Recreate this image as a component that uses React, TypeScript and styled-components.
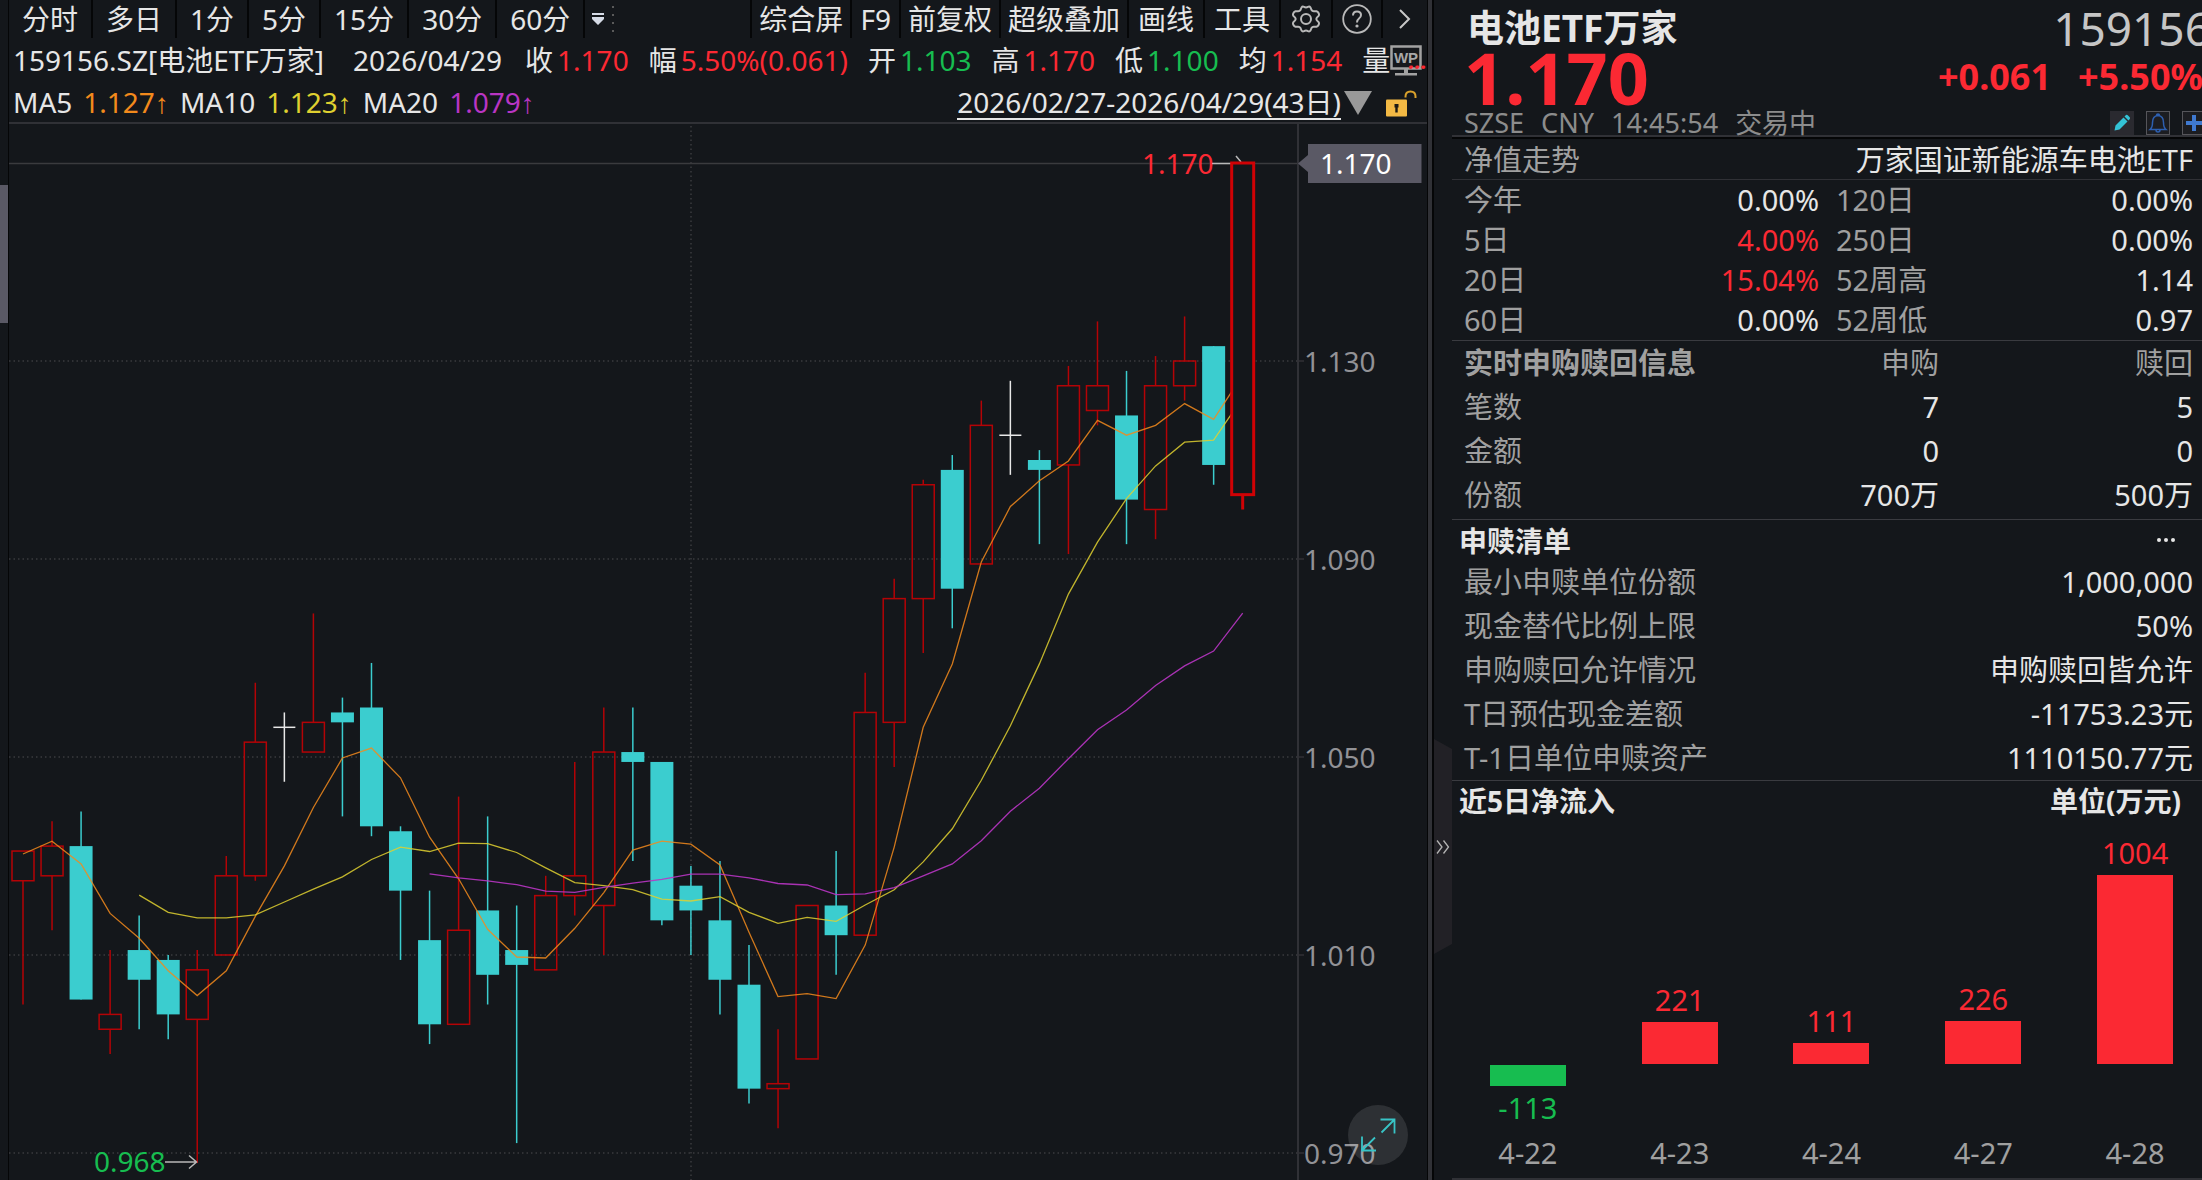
import React from "react";
import styled, { createGlobalStyle } from "styled-components";

const color = {
  bg: "#14171b",
  line: "#303136",
  black: "#050607",
  text: "#e6e6e6",
  muted: "#a0a0a0",
  up: "#fb2933",
  down: "#17bd50",
  candleUp: "#b40306",
  candleDown: "#3bcdcf",
  ma5: "#f28a1c",
  ma10: "#dfd030",
  ma20: "#b935c4",
  tag: "#5a5965",
};

const Global = createGlobalStyle`
  * { box-sizing: border-box; }
  body {
    margin: 0;
    background: ${color.bg};
    color: ${color.text};
    font-family: "Noto Sans", "Noto Sans CJK SC", sans-serif;
    font-size: 28px;
  }
  button {
    margin: 0;
    padding: 0;
    border: 0;
    background: none;
    color: inherit;
    font: inherit;
    cursor: pointer;
  }
`;

type Tone = "up" | "down" | "plain" | "muted";
const toneColor: Record<Tone, string> = {
  up: color.up,
  down: color.down,
  plain: color.text,
  muted: color.muted,
};

/* ---------- page frame ---------- */

const Page = styled.main`
  display: grid;
  grid-template-columns: 9px minmax(0, 1fr) 7px 18px 750px;
  min-height: 100vh;
  overflow: hidden;
`;

const ScrollRail = styled.div`
  border-right: 1px solid ${color.black};
  padding-top: 185px;
`;

const ScrollThumb = styled.div`
  height: 138px;
  background: ${color.tag};
`;

const Splitter = styled.div`
  background: ${color.line};
  border-left: 1px solid ${color.black};
  border-right: 2px solid ${color.black};
`;

const HandleRail = styled.div`
  padding-top: 739px;
`;

const CollapseButton = styled.button`
  display: flex;
  align-items: center;
  justify-content: center;
  width: 18px;
  height: 215px;
  background: #222126;
  clip-path: polygon(0 0, 100% 10px, 100% 205px, 0 100%);
`;

/* ---------- chart side ---------- */

const ChartPane = styled.section`
  position: relative;
  min-width: 0;
`;

const Toolbar = styled.nav`
  display: flex;
  justify-content: space-between;
  height: 38px;
`;

const ToolGroup = styled.div<{ $bordered?: boolean }>`
  display: flex;
  border-left: ${(p) => (p.$bordered ? `2px solid ${color.black}` : "0")};
`;

const ToolButton = styled.button<{ $pad: number; $last?: boolean }>`
  display: flex;
  align-items: center;
  justify-content: center;
  padding: 0 ${(p) => p.$pad}px;
  border-right: ${(p) => (p.$last ? "0" : `2px solid ${color.black}`)};
  line-height: 38px;
  white-space: nowrap;
`;

const QuoteRow = styled.dl`
  display: flex;
  align-items: center;
  gap: 20px;
  height: 44px;
  margin: 0;
  padding-left: 4px;
  line-height: 44px;
  white-space: nowrap;
`;

const SymbolName = styled.div`
  margin-right: 9px;
`;

const QuoteDate = styled.div`
  margin-right: 3px;
`;

const Quote = styled.div`
  display: flex;
  gap: 4px;
`;

const QuoteLabel = styled.dt`
  margin: 0;
`;

const QuoteValue = styled.dd<{ $tone: Tone }>`
  margin: 0;
  color: ${(p) => toneColor[p.$tone]};
`;

const VolumeQuote = styled(Quote)`
  position: relative;
  align-items: center;
  gap: 0;
`;

const Ellipsis = styled.dd`
  position: absolute;
  right: -4px;
  top: 0;
  margin: 0;
  color: ${color.up};
  font-weight: 700;
  font-size: 22px;
`;

const IndicatorRow = styled.div`
  display: flex;
  align-items: center;
  justify-content: space-between;
  height: 42px;
  padding: 2px 10px 0 4px;
  border-bottom: 2px solid ${color.line};
  line-height: 40px;
  white-space: nowrap;
`;

const Indicators = styled.div`
  display: flex;
  gap: 11px;
`;

const IndicatorValue = styled.span<{ $color: string }>`
  color: ${(p) => p.$color};
`;

const Arrow = styled.span`
  font-family: "Liberation Serif", serif;
`;

const RangeTools = styled.div`
  display: flex;
  align-items: center;
`;

const RangeButton = styled.button`
  border-bottom: 2px solid ${color.text};
  line-height: 32px;
  margin-right: 3px;
`;

const LockButton = styled.button`
  display: flex;
  margin-left: 14px;
`;

const ChartSvg = styled.svg`
  display: block;
  width: 100%;
  height: auto;
`;

const ExpandButton = styled.button`
  position: absolute;
  right: 19px;
  bottom: 15px;
  display: flex;
  align-items: center;
  justify-content: center;
  width: 60px;
  height: 60px;
  border-radius: 50%;
  background: rgba(255, 255, 255, 0.11);
`;

/* ---------- info side ---------- */

const InfoPane = styled.aside`
  margin-right: -9px;
  font-size: 29px;
`;

const Header = styled.header`
  border-bottom: 2px solid ${color.line};
  box-shadow: 0 2px 0 ${color.black};
  height: 137px;
`;

const HeaderRow = styled.div<{ $height: number; $right: number }>`
  display: flex;
  align-items: center;
  justify-content: space-between;
  height: ${(p) => p.$height}px;
  padding: 0 ${(p) => p.$right}px 0 12px;
  line-height: ${(p) => p.$height}px;
  white-space: nowrap;
`;

const Title = styled.h1`
  margin: 0 0 0 3px;
  font-size: 37px;
  font-weight: 700;
`;

const Code = styled.span`
  color: #c6c6c6;
  font-size: 46px;
`;

const Price = styled.strong`
  color: ${color.up};
  font-size: 72px;
  font-weight: 700;
`;

const Changes = styled.div`
  display: flex;
  gap: 27px;
  color: ${color.up};
  font-size: 36px;
  font-weight: 700;
`;

const Status = styled.div`
  display: flex;
  gap: 17px;
  color: #8c8c8c;
  font-size: 27px;
`;

const IconButtons = styled.div`
  display: flex;
  gap: 12px;
`;

const IconButton = styled.button<{ $outlined?: boolean }>`
  display: flex;
  align-items: center;
  justify-content: center;
  width: 24px;
  height: 24px;
  background: ${(p) => (p.$outlined ? "#1c1d21" : "#2a2a30")};
  border: ${(p) => (p.$outlined ? "1px solid #55555a" : "0")};
`;

const FundRow = styled.div`
  display: flex;
  justify-content: space-between;
  height: 40px;
  margin-top: 3px;
  padding: 0 18px 0 12px;
  border-bottom: 1px solid ${color.line};
  line-height: 39px;
`;

const Muted = styled.span`
  color: ${color.muted};
`;

const Section = styled.section<{ $bottom?: number }>`
  border-bottom: 1px solid #3a3b40;
  padding: 0 18px ${(p) => p.$bottom ?? 0}px 12px;
`;

const Table = styled.table`
  width: 100%;
  table-layout: fixed;
  border-collapse: collapse;
`;

const Row = styled.tr<{ $height: number }>`
  height: ${(p) => p.$height}px;
  line-height: ${(p) => p.$height}px;
`;

const Head = styled.th<{ $strong?: boolean; $end?: boolean; $indent?: boolean }>`
  padding: 0 0 0 ${(p) => (p.$indent ? 17 : 0)}px;
  color: ${color.muted};
  font-weight: ${(p) => (p.$strong ? 700 : 400)};
  text-align: ${(p) => (p.$end ? "right" : "left")};
  white-space: nowrap;
`;

const Cell = styled.td<{ $tone?: Tone }>`
  padding: 0;
  color: ${(p) => toneColor[p.$tone ?? "plain"]};
  text-align: right;
  white-space: nowrap;
`;

const SectionTitle = styled.div<{ $height: number }>`
  display: flex;
  align-items: center;
  justify-content: space-between;
  height: ${(p) => p.$height}px;
  padding: 0 30px 0 7px;
  font-size: 28px;
  font-weight: 700;
`;

const TitleText = styled.h2`
  margin: 0;
  font-size: 28px;
`;

const MoreButton = styled.button`
  display: flex;
  gap: 3px;
  padding: 8px 6px;
`;

const Dot = styled.i`
  width: 4px;
  height: 4px;
  border-radius: 50%;
  background: ${color.text};
`;

const FlowSection = styled.section`
  border-bottom: 2px solid ${color.line};
  padding-bottom: 3px;
`;

const Bars = styled.div`
  display: grid;
  grid-template-columns: repeat(5, 1fr);
`;

const BarColumn = styled.figure`
  display: grid;
  grid-template-rows: 245px 67px 44px;
  margin: 0;
  line-height: 44px;
  text-align: center;
`;

const Above = styled.div`
  display: flex;
  flex-direction: column;
  align-items: center;
  justify-content: flex-end;
  color: ${color.up};
`;

const Below = styled.div`
  display: flex;
  flex-direction: column;
  align-items: center;
  padding-top: 1px;
  color: ${color.down};
`;

const Bar = styled.div`
  width: 76px;
  background: currentColor;
`;

const BarDate = styled.figcaption`
  color: ${color.muted};
`;

/* ---------- data ---------- */

const periods = ["分时", "多日", "1分", "5分", "15分", "30分", "60分"];

const tools: { label: string; pad: number }[] = [
  { label: "综合屏", pad: 7 },
  { label: "F9", pad: 8 },
  { label: "前复权", pad: 7 },
  { label: "超级叠加", pad: 7 },
  { label: "画线", pad: 9 },
  { label: "工具", pad: 9 },
];

const quotes: { label: string; value: string; tone: Tone }[] = [
  { label: "收", value: "1.170", tone: "up" },
  { label: "幅", value: "5.50%(0.061)", tone: "up" },
  { label: "开", value: "1.103", tone: "down" },
  { label: "高", value: "1.170", tone: "up" },
  { label: "低", value: "1.100", tone: "down" },
  { label: "均", value: "1.154", tone: "up" },
];

// open, close, high, low
const candles: [number, number, number, number][] = [
  [1.025, 1.031, 1.031, 1.0],
  [1.026, 1.032, 1.037, 1.015],
  [1.032, 1.001, 1.039, 1.001],
  [0.995, 0.998, 1.011, 0.99],
  [1.011, 1.005, 1.018, 0.995],
  [1.009, 0.998, 1.01, 0.993],
  [0.997, 1.007, 1.011, 0.968],
  [1.01, 1.026, 1.03, 1.01],
  [1.026, 1.053, 1.065, 1.025],
  [1.056, 1.056, 1.059, 1.045],
  [1.051, 1.057, 1.079, 1.051],
  [1.059, 1.057, 1.062, 1.038],
  [1.06, 1.036, 1.069, 1.034],
  [1.035, 1.023, 1.036, 1.009],
  [1.013, 0.996, 1.023, 0.992],
  [0.996, 1.015, 1.042, 0.996],
  [1.019, 1.006, 1.038, 1.0],
  [1.011, 1.008, 1.02, 0.972],
  [1.007, 1.022, 1.026, 1.007],
  [1.022, 1.026, 1.049, 1.018],
  [1.02, 1.051, 1.06, 1.01],
  [1.051, 1.049, 1.06, 1.029],
  [1.049, 1.017, 1.049, 1.016],
  [1.024, 1.019, 1.028, 1.01],
  [1.017, 1.005, 1.029, 0.998],
  [1.004, 0.983, 1.012, 0.98],
  [0.983, 0.984, 0.995, 0.975],
  [0.989, 1.02, 1.02, 0.989],
  [1.02, 1.014, 1.031, 1.006],
  [1.014, 1.059, 1.067, 1.014],
  [1.057, 1.082, 1.086, 1.048],
  [1.082, 1.105, 1.106, 1.071],
  [1.108, 1.084, 1.111, 1.076],
  [1.089, 1.117, 1.122, 1.089],
  [1.115, 1.115, 1.126, 1.107],
  [1.11, 1.108, 1.112, 1.093],
  [1.109, 1.125, 1.129, 1.091],
  [1.12, 1.125, 1.138, 1.117],
  [1.119, 1.102, 1.128, 1.093],
  [1.1, 1.125, 1.131, 1.094],
  [1.125, 1.13, 1.139, 1.122],
  [1.133, 1.109, 1.133, 1.105],
  [1.103, 1.17, 1.17, 1.1],
];

const axisPrices = [1.13, 1.09, 1.05, 1.01, 0.97];

const returns: [string, string, Tone, string, string][] = [
  ["今年", "0.00%", "plain", "120日", "0.00%"],
  ["5日", "4.00%", "up", "250日", "0.00%"],
  ["20日", "15.04%", "up", "52周高", "1.14"],
  ["60日", "0.00%", "plain", "52周低", "0.97"],
];

const orders: [string, string, string][] = [
  ["笔数", "7", "5"],
  ["金额", "0", "0"],
  ["份额", "700万", "500万"],
];

const basket: [string, string][] = [
  ["最小申赎单位份额", "1,000,000"],
  ["现金替代比例上限", "50%"],
  ["申购赎回允许情况", "申购赎回皆允许"],
  ["T日预估现金差额", "-11753.23元"],
  ["T-1日单位申赎资产", "1110150.77元"],
];

const flows: { date: string; value: number }[] = [
  { date: "4-22", value: -113 },
  { date: "4-23", value: 221 },
  { date: "4-24", value: 111 },
  { date: "4-27", value: 226 },
  { date: "4-28", value: 1004 },
];

/* ---------- candlestick chart ---------- */

const W = 1418;
const H = 1056;
const AXIS_X = 1289;
const xAt = (i: number) => 14 + i * 29.04;
const yAt = (p: number) => 39 + (1.17 - p) * 4950;

// `lead` holds the averages of the days whose window opens before the first candle.
function movingAverage(n: number, start: number, lead: number[]) {
  const points: string[] = [];
  for (let i = start; i < candles.length; i++) {
    let value = lead[i - start];
    if (value === undefined) {
      value = 0;
      for (let k = i - n + 1; k <= i; k++) value += candles[k][1] / n;
    }
    points.push(`${xAt(i).toFixed(1)},${yAt(value).toFixed(1)}`);
  }
  return points.join(" ");
}

const ma5 = movingAverage(5, 0, [1.0304, 1.033, 1.0284, 1.0184]);
const ma10 = movingAverage(10, 4, [1.0221, 1.0186, 1.0175, 1.0175, 1.0181]);
const ma20 = movingAverage(20, 14, [1.0264, 1.0256, 1.025, 1.0242, 1.0229]);

function Candle({ index }: { index: number }) {
  const [open, close, high, low] = candles[index];
  const x = xAt(index);
  const top = yAt(Math.max(open, close));
  const bottom = yAt(Math.min(open, close));
  if (open === close) {
    return (
      <g stroke="#e8e8e8" strokeWidth={1.5}>
        <line x1={x} x2={x} y1={yAt(high)} y2={yAt(low)} />
        <line x1={x - 11} x2={x + 11} y1={top} y2={top} />
      </g>
    );
  }
  if (close < open) {
    return (
      <g stroke={color.candleDown} strokeWidth={1.5}>
        <line x1={x} x2={x} y1={yAt(high)} y2={yAt(low)} />
        <rect x={x - 11.5} y={top} width={23} height={bottom - top} fill={color.candleDown} stroke="none" />
      </g>
    );
  }
  const latest = index === candles.length - 1;
  return (
    <g stroke={latest ? "#d00205" : color.candleUp} strokeWidth={latest ? 3 : 1.5}>
      <line x1={x} x2={x} y1={yAt(high)} y2={top} />
      <line x1={x} x2={x} y1={bottom} y2={yAt(low)} />
      <rect x={x - 11} y={top} width={22} height={bottom - top} fill={latest ? color.bg : "none"} />
    </g>
  );
}

function PriceChart() {
  const last = candles.length - 1;
  return (
    <ChartSvg viewBox={`0 0 ${W} ${H}`} role="img" aria-label="日K线" fontSize={28}>
      <g stroke="#3a3b3f" strokeWidth={1.5} strokeDasharray="1.5 3">
        {axisPrices.map((p) => (
          <line key={p} x1={0} x2={AXIS_X} y1={yAt(p)} y2={yAt(p)} />
        ))}
        <line x1={682} x2={682} y1={2} y2={H} />
      </g>
      <line x1={0} x2={AXIS_X} y1={39.5} y2={39.5} stroke="#3a3b3e" strokeWidth={1.5} />
      <line x1={AXIS_X} x2={AXIS_X} y1={0} y2={H} stroke={color.line} strokeWidth={2} />
      {axisPrices.map((p) => (
        <g key={p}>
          <line x1={AXIS_X} x2={AXIS_X + 6} y1={yAt(p)} y2={yAt(p)} stroke={color.line} strokeWidth={1.5} />
          <text x={AXIS_X + 6} y={yAt(p) + 11} fill="#929296">
            {p.toFixed(3)}
          </text>
        </g>
      ))}

      {candles.slice(0, last).map((_, i) => (
        <Candle key={i} index={i} />
      ))}
      <g fill="none" strokeWidth={1.3}>
        <polyline points={ma5} stroke={color.ma5} strokeOpacity={0.85} />
        <polyline points={ma10} stroke={color.ma10} strokeOpacity={0.85} />
        <polyline points={ma20} stroke={color.ma20} strokeOpacity={0.9} />
      </g>

      <g stroke="#b8b8b8" strokeWidth={1.5} fill="none">
        <path d="M1203 39.5H1222M1227 32L1232 38" />
        <path d="M156 1038H187M180 1031.500L187.500 1038L180 1044.500" />
      </g>
      <Candle index={last} />
      <text x={1133} y={50} fill={color.up}>
        1.170
      </text>
      <text x={85} y={1048} fill={color.down}>
        0.968
      </text>

      <path d="M1289 39.500L1299 31V20H1412.500V59H1299V48Z" fill={color.tag} />
      <text x={1311} y={50} fill="#ffffff">
        1.170
      </text>
    </ChartSvg>
  );
}

/* ---------- icons ---------- */

const GearIcon = () => (
  <svg width="30" height="30" viewBox="0 0 30 30" fill="none" stroke="#b9b9b9" strokeWidth="2" strokeLinejoin="round">
    <path d="M10.500 3.500Q11.500 2 13 2.800Q15 4 17 2.800Q18.500 2 19.500 3.500L20.500 6Q21.300 7.300 23 7.200L25.500 7.200Q27 7.700 27.800 9.500Q28.500 11 27.500 12Q25.300 13.800 25.300 15Q25.300 16.200 27.500 18Q28.500 19 27.800 20.500Q27 22.300 25.500 22.800L23 22.800Q21.300 22.700 20.500 24L19.500 26.500Q18.500 28 17 27.200Q15 26 13 27.200Q11.500 28 10.500 26.500L9.500 24Q8.700 22.700 7 22.800L4.500 22.800Q3 22.300 2.200 20.500Q1.500 19 2.500 18Q4.700 16.200 4.700 15Q4.700 13.800 2.500 12Q1.500 11 2.200 9.500Q3 7.700 4.500 7.200L7 7.200Q8.700 7.300 9.500 6Z" />
    <circle cx="15" cy="15" r="5" />
  </svg>
);

const HelpIcon = () => (
  <svg width="30" height="30" viewBox="0 0 30 30" fill="none" stroke="#b9b9b9" strokeWidth="1.8">
    <circle cx="15" cy="15" r="13.800" />
    <path d="M11 11.500Q11 7.500 15 7.500Q19 7.500 19 11Q19 13 17 14.500Q15 16 15 18.500" strokeWidth="2" />
    <circle cx="15" cy="22" r="1.600" fill="#b9b9b9" stroke="none" />
  </svg>
);

const NextIcon = () => (
  <svg width="12" height="20" viewBox="0 0 12 20" fill="none" stroke="#c8c8c8" strokeWidth="2">
    <path d="M1 1L10 10L1 19" />
  </svg>
);

const MoreIcon = () => (
  <svg width="12" height="12" viewBox="0 0 12 12" fill="#d5dbe6">
    <path d="M0 0H12V2H0ZM0 4H12V6L6 12L0 6Z" />
  </svg>
);

const DottedEdge = () => (
  <svg width="4" height="38" viewBox="0 0 4 38" stroke="#5a5a5a" strokeWidth="2" strokeDasharray="2 6">
    <path d="M2 6V34" />
  </svg>
);

const MonitorIcon = () => (
  <svg width="32" height="31" viewBox="0 0 32 31">
    <path d="M1.500 1.500H30.500V23.500H1.500Z" fill="#16181c" stroke="#a2a2a2" strokeWidth="2.500" />
    <path d="M14 24H18V28H27V30.500H5V28H14Z" fill="#a2a2a2" />
    <text x="16" y="18" fill="#a8a8a8" fontFamily="Liberation Sans, sans-serif" fontSize="15" fontWeight="700" textAnchor="middle">
      WP
    </text>
  </svg>
);

const TriangleIcon = () => (
  <svg width="28" height="24" viewBox="0 0 28 24" fill="#999999">
    <path d="M0 0H28L14 24Z" />
  </svg>
);

const UnlockIcon = () => (
  <svg width="31" height="27" viewBox="0 0 31 27">
    <rect x="0" y="9.500" width="21" height="17" rx="1" fill="#f3b944" />
    <path d="M19.500 7.500V6.500Q19.500 1.500 24.500 1.500Q29.500 1.500 29.500 6.500V8" fill="none" stroke="#d9a12c" strokeWidth="2" />
    <path d="M8.500 14H12.500V17.500H11.700V22.500H9.300V17.500H8.500Z" fill="#1c1a14" />
  </svg>
);

const ExpandIcon = () => (
  <svg width="36" height="36" viewBox="0 0 36 36" fill="none" stroke="#38c4c6" strokeWidth="1.800">
    <path d="M20.500 2.500H34.500V16.500M34 3L21.500 15.500" />
    <path d="M2 19.500V33.500H16M2.500 33L15 20.500" />
  </svg>
);

const CollapseIcon = () => (
  <svg width="14" height="14" viewBox="0 0 14 14" fill="none" stroke="#b4b4b4" strokeWidth="1.300">
    <path d="M1 0.500L6 7L1 13.500M7.500 0.500L12.500 7L7.500 13.500" />
  </svg>
);

const PencilIcon = () => (
  <svg width="18" height="18" viewBox="0 0 18 18" fill="#33c3d6">
    <path d="M1.500 16.500L2.500 11.500L10.500 3.500L14.500 7.500L6.500 15.500ZM11.500 2.500L13 1Q14 0.500 15 1.500L16.500 3Q17.500 4 16.800 5L15.500 6.500Z" />
  </svg>
);

const BellIcon = () => (
  <svg width="20" height="20" viewBox="0 0 20 20" fill="none" stroke="#2d5fb0" strokeWidth="1.500">
    <path d="M2 16.500Q4.500 14.500 4.500 9.500Q4.500 3 10 2.500Q15.500 3 15.500 9.500Q15.500 14.500 18 16.500ZM8.500 2.500Q8.500 1 10 1Q11.500 1 11.500 2.500M8 17Q8 19 10 19Q12 19 12 17" />
  </svg>
);

const PlusIcon = () => (
  <svg width="18" height="18" viewBox="0 0 18 18" stroke="#3f79cf" strokeWidth="4">
    <path d="M9 1V17M1 9H17" />
  </svg>
);

/* ---------- assembled page ---------- */

function Indicator({ name, value, tint }: { name: string; value: string; tint: string }) {
  return (
    <>
      <span>{name}</span>
      <IndicatorValue $color={tint}>
        {value}
        <Arrow>↑</Arrow>
      </IndicatorValue>
    </>
  );
}

function FlowBar({ date, value }: { date: string; value: number }) {
  const height = Math.round(Math.abs(value) * 0.1885);
  return (
    <BarColumn>
      <Above>
        {value > 0 && (
          <>
            <span>{value}</span>
            <Bar style={{ height }} />
          </>
        )}
      </Above>
      <Below>
        {value < 0 && (
          <>
            <Bar style={{ height }} />
            <span>{value}</span>
          </>
        )}
      </Below>
      <BarDate>{date}</BarDate>
    </BarColumn>
  );
}

export default function App() {
  return (
    <>
      <Global />
      <Page lang="zh-CN">
        <ScrollRail>
          <ScrollThumb />
        </ScrollRail>

        <ChartPane>
          <Toolbar>
            <ToolGroup>
              {periods.map((p) => (
                <ToolButton key={p} $pad={13}>
                  {p}
                </ToolButton>
              ))}
              <ToolButton $pad={7} $last aria-label="更多周期">
                <MoreIcon />
              </ToolButton>
              <DottedEdge />
            </ToolGroup>
            <ToolGroup $bordered>
              {tools.map((t) => (
                <ToolButton key={t.label} $pad={t.pad}>
                  {t.label}
                </ToolButton>
              ))}
              <ToolButton $pad={10} aria-label="设置">
                <GearIcon />
              </ToolButton>
              <ToolButton $pad={9} aria-label="帮助">
                <HelpIcon />
              </ToolButton>
              <ToolButton $pad={16} $last aria-label="下一页">
                <NextIcon />
              </ToolButton>
            </ToolGroup>
          </Toolbar>

          <QuoteRow>
            <SymbolName>159156.SZ[电池ETF万家]</SymbolName>
            <QuoteDate>2026/04/29</QuoteDate>
            {quotes.map((q) => (
              <Quote key={q.label}>
                <QuoteLabel>{q.label}</QuoteLabel>
                <QuoteValue $tone={q.tone}>{q.value}</QuoteValue>
              </Quote>
            ))}
            <VolumeQuote>
              <QuoteLabel>量</QuoteLabel>
              <MonitorIcon />
              <Ellipsis>...</Ellipsis>
            </VolumeQuote>
          </QuoteRow>

          <IndicatorRow>
            <Indicators>
              <Indicator name="MA5" value="1.127" tint={color.ma5} />
              <Indicator name="MA10" value="1.123" tint={color.ma10} />
              <Indicator name="MA20" value="1.079" tint={color.ma20} />
            </Indicators>
            <RangeTools>
              <RangeButton>2026/02/27-2026/04/29(43日)</RangeButton>
              <TriangleIcon />
              <LockButton aria-label="锁定">
                <UnlockIcon />
              </LockButton>
            </RangeTools>
          </IndicatorRow>

          <PriceChart />
          <ExpandButton aria-label="放大">
            <ExpandIcon />
          </ExpandButton>
        </ChartPane>

        <Splitter />
        <HandleRail>
          <CollapseButton aria-label="收起">
            <CollapseIcon />
          </CollapseButton>
        </HandleRail>

        <InfoPane>
          <Header>
            <HeaderRow $height={56} $right={0}>
              <Title>电池ETF万家</Title>
              <Code>159156</Code>
            </HeaderRow>
            <HeaderRow $height={42} $right={8}>
              <Price>1.170</Price>
              <Changes>
                <span>+0.061</span>
                <span>+5.50%</span>
              </Changes>
            </HeaderRow>
            <HeaderRow $height={50} $right={5}>
              <Status>
                <span>SZSE</span>
                <span>CNY</span>
                <span>14:45:54</span>
                <span>交易中</span>
              </Status>
              <IconButtons>
                <IconButton aria-label="编辑">
                  <PencilIcon />
                </IconButton>
                <IconButton $outlined aria-label="提醒">
                  <BellIcon />
                </IconButton>
                <IconButton $outlined aria-label="添加">
                  <PlusIcon />
                </IconButton>
              </IconButtons>
            </HeaderRow>
          </Header>

          <FundRow>
            <Muted>净值走势</Muted>
            <span>万家国证新能源车电池ETF</span>
          </FundRow>

          <Section>
            <Table>
              <colgroup>
                <col width={155} />
                <col width={200} />
                <col />
                <col width={180} />
              </colgroup>
              <tbody>
                {returns.map(([a, av, tone, b, bv]) => (
                  <Row key={a} $height={40}>
                    <Head scope="row">{a}</Head>
                    <Cell $tone={tone}>{av}</Cell>
                    <Head scope="row" $indent>
                      {b}
                    </Head>
                    <Cell>{bv}</Cell>
                  </Row>
                ))}
              </tbody>
            </Table>
          </Section>

          <Section $bottom={2}>
            <Table>
              <colgroup>
                <col />
                <col width={180} />
                <col width={254} />
              </colgroup>
              <thead>
                <Row $height={44}>
                  <Head scope="col" $strong>
                    实时申购赎回信息
                  </Head>
                  <Head scope="col" $end>
                    申购
                  </Head>
                  <Head scope="col" $end>
                    赎回
                  </Head>
                </Row>
              </thead>
              <tbody>
                {orders.map(([name, buy, sell]) => (
                  <Row key={name} $height={44}>
                    <Head scope="row">{name}</Head>
                    <Cell>{buy}</Cell>
                    <Cell>{sell}</Cell>
                  </Row>
                ))}
              </tbody>
            </Table>
          </Section>

          <SectionTitle $height={40}>
            <TitleText>申赎清单</TitleText>
            <MoreButton aria-label="更多">
              <Dot />
              <Dot />
              <Dot />
            </MoreButton>
          </SectionTitle>
          <Section>
            <Table>
              <tbody>
                {basket.map(([name, value]) => (
                  <Row key={name} $height={44}>
                    <Head scope="row">{name}</Head>
                    <Cell>{value}</Cell>
                  </Row>
                ))}
              </tbody>
            </Table>
          </Section>

          <FlowSection>
            <SectionTitle $height={38}>
              <TitleText>近5日净流入</TitleText>
              <span>单位(万元)</span>
            </SectionTitle>
            <Bars>
              {flows.map((f) => (
                <FlowBar key={f.date} date={f.date} value={f.value} />
              ))}
            </Bars>
          </FlowSection>
        </InfoPane>
      </Page>
    </>
  );
}
